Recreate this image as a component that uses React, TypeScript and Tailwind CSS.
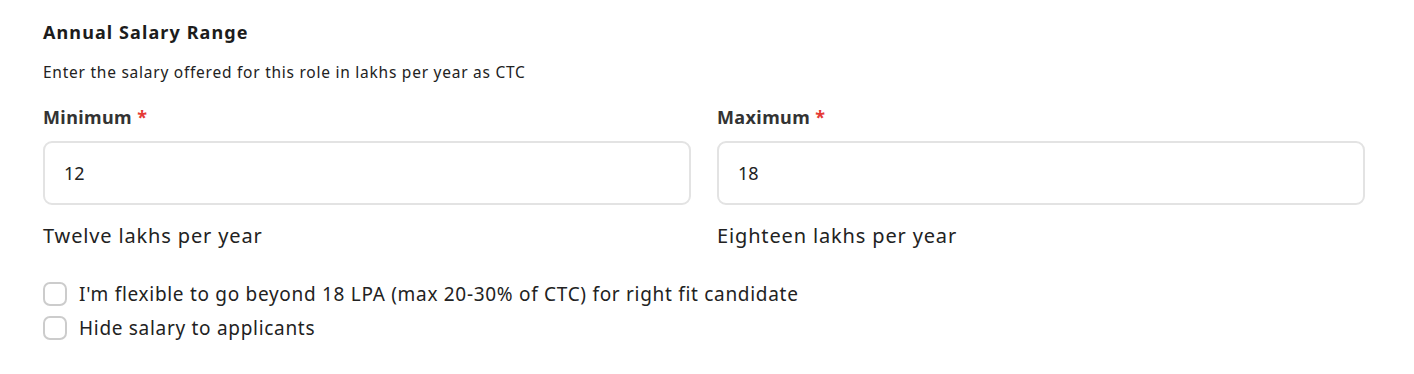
export default function App() {
  return (
    <div className="min-h-screen bg-white font-['Noto_Sans',_sans-serif] text-[#222]">
      <div className="pl-[43px] pr-[49px] pt-[20px]">
        <h2 className="text-[18px] font-bold leading-6 tracking-[1.1px] text-[#1c1c1c]">Annual Salary Range</h2>
        <p className="mt-[18px] text-[15.5px] leading-5 tracking-[0.75px] text-[#222]">
          Enter the salary offered for this role in lakhs per year as CTC
        </p>

        <div className="mt-[23px] grid grid-cols-2 gap-[26px]">
          <SalaryField label="Minimum" value="12" words="Twelve lakhs per year" />
          <SalaryField label="Maximum" value="18" words="Eighteen lakhs per year" />
        </div>

        <div className="mt-[32px] flex flex-col gap-[10px]">
          <Check label="I'm flexible to go beyond 18 LPA (max 20-30% of CTC) for right fit candidate" />
          <Check label="Hide salary to applicants" />
        </div>
      </div>
    </div>
  );
}

function SalaryField({ label, value, words }: { label: string; value: string; words: string }) {
  return (
    <div className="flex flex-col">
      <label className="text-[18px] font-bold leading-6 tracking-[0.4px] text-[#333]">
        {label} <span className="text-[#e53935]">*</span>
      </label>
      <div className="mt-[12px] flex h-[64px] items-center rounded-[9px] border-2 border-[#e3e3e3] px-[19px] text-[18px] text-[#222]">
        {value}
      </div>
      <div className="mt-[17px] text-[20px] leading-7 tracking-[0.85px] text-[#222]">{words}</div>
    </div>
  );
}

function Check({ label }: { label: string }) {
  return (
    <label className="flex items-center gap-3">
      <span className="h-6 w-6 shrink-0 rounded-[7px] border-2 border-[#cccccc] bg-white" />
      <span className="text-[19px] leading-6 tracking-[0.7px] text-[#222]">{label}</span>
    </label>
  );
}
